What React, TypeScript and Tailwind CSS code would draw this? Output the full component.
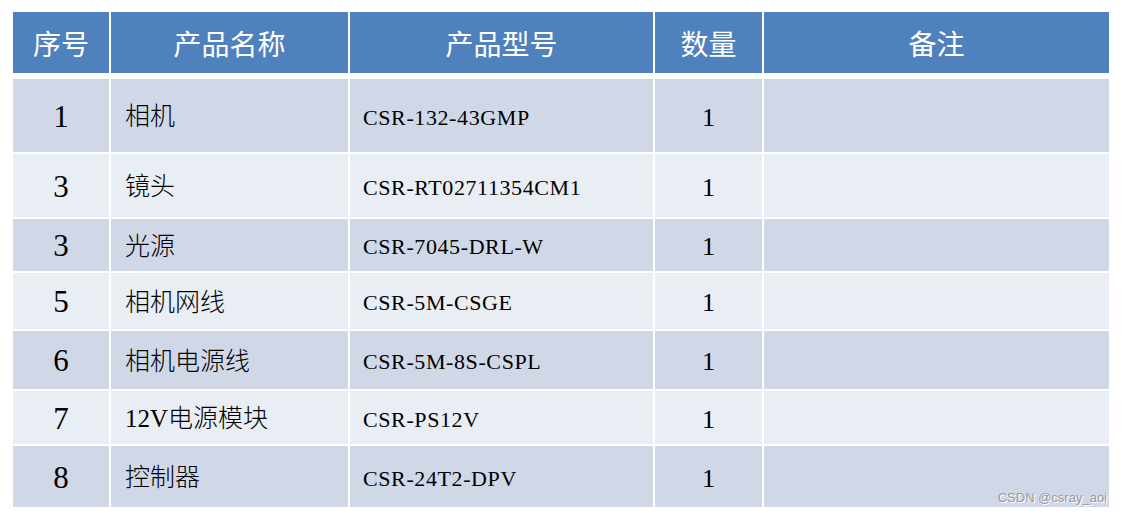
const rows = [
  { no: "1", name: "相机", model: "CSR-132-43GMP", qty: "1", h: "h-[73px]" },
  { no: "3", name: "镜头", model: "CSR-RT02711354CM1", qty: "1", h: "h-[63px]" },
  { no: "3", name: "光源", model: "CSR-7045-DRL-W", qty: "1", h: "h-[52px]" },
  { no: "5", name: "相机网线", model: "CSR-5M-CSGE", qty: "1", h: "h-[56px]" },
  { no: "6", name: "相机电源线", model: "CSR-5M-8S-CSPL", qty: "1", h: "h-[58px]" },
  { no: "7", name: "12V电源模块", model: "CSR-PS12V", qty: "1", h: "h-[53px]" },
  { no: "8", name: "控制器", model: "CSR-24T2-DPV", qty: "1", h: "h-[61px]" },
]

const cols = "grid grid-cols-[96px_237px_303px_107px_345px] gap-x-[2px]"
const cjk = "font-['Noto_Sans_CJK_SC',sans-serif]"
const serif = "font-['Liberation_Serif','Noto_Sans_CJK_SC',serif]"

export default function App() {
  return (
    <div className="relative w-[1123px] h-[516px] bg-white pl-[13px] pt-[12px]">
      <div className="w-[1096px]">
        <div className={`${cols} h-[61px] text-white text-[28px] ${cjk}`}>
          <div className="bg-[#4f81bd] flex items-center justify-center">序号</div>
          <div className="bg-[#4f81bd] flex items-center justify-center">产品名称</div>
          <div className="bg-[#4f81bd] flex items-center justify-center">产品型号</div>
          <div className="bg-[#4f81bd] flex items-center justify-center">数量</div>
          <div className="bg-[#4f81bd] flex items-center justify-center">备注</div>
        </div>

        <div className="mt-[6px] flex flex-col gap-y-[2px] text-black">
          {rows.map((r, i) => {
            const bg = i % 2 === 0 ? "bg-[#d0d8e8]" : "bg-[#e9edf4]"
            return (
              <div key={i} className={`${cols} ${r.h}`}>
                <div className={`${bg} flex items-center justify-center pt-[3px] text-[31px] ${serif}`}>{r.no}</div>
                <div className={`${bg} flex items-center pl-[14px] pt-[3px] text-[25px] font-light ${serif}`}>{r.name}</div>
                <div className={`${bg} flex items-center pl-[13px] pt-[3px] text-[22px] tracking-[0.6px] ${serif}`}>{r.model}</div>
                <div className={`${bg} flex items-center justify-center pt-[3px] text-[26px] ${serif}`}>{r.qty}</div>
                <div className={bg}></div>
              </div>
            )
          })}
        </div>
      </div>

      <div className="absolute right-[16px] bottom-[9px] text-[13px] text-[#9a9a9a] font-['Liberation_Sans',sans-serif] [text-shadow:1px_1px_0_#ffffff]">
        CSDN @csray_aoi
      </div>
    </div>
  )
}
